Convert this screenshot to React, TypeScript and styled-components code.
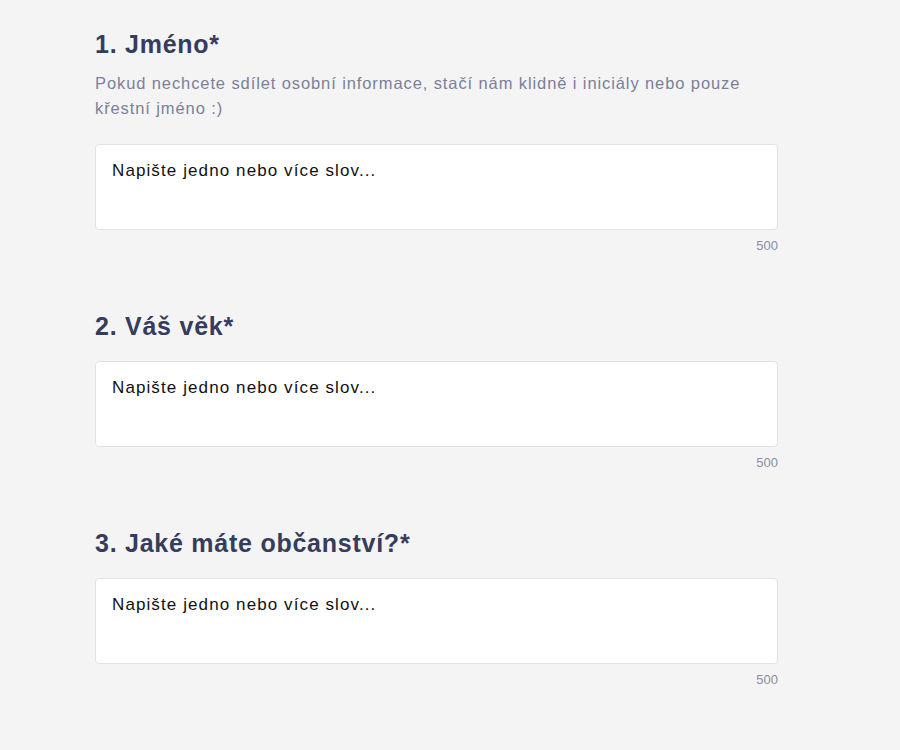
import React from "react";
import styled, { createGlobalStyle } from "styled-components";

const Global = createGlobalStyle`
  html, body { margin: 0; padding: 0; background: #f4f4f4; }
  body { font-family: "Liberation Sans", Arial, sans-serif; }
`;

const Page = styled.div`
  padding: 27px 0 40px 95px;
  width: 683px;
`;

const Section = styled.section`
  display: flex;
  flex-direction: column;
  & + & { margin-top: 56px; }
`;

const Heading = styled.h2`
  margin: 0;
  font-size: 25px;
  line-height: 34px;
  font-weight: 600;
  letter-spacing: 0.75px;
  color: #363c5e;
`;

const Helper = styled.p`
  margin: 10px 0 0;
  font-size: 16.5px;
  line-height: 25px;
  letter-spacing: 0.9px;
  color: #7b8099;
`;

const Box = styled.div<{ $withHelper?: boolean }>`
  margin-top: ${(p) => (p.$withHelper ? "23px" : "18px")};
  height: 86px;
  box-sizing: border-box;
  background: #ffffff;
  border: 1px solid #e2e2e4;
  border-radius: 4px;
  padding: 15px 16px;
  font-size: 17px;
  line-height: 22px;
  letter-spacing: 1.1px;
  color: #111111;
`;

const Counter = styled.div`
  align-self: flex-end;
  margin-top: 9px;
  font-size: 13px;
  line-height: 14px;
  color: #8a8ea3;
`;

const questions = [
  {
    title: "1. Jméno*",
    helper:
      "Pokud nechcete sdílet osobní informace, stačí nám klidně i iniciály nebo pouze křestní jméno :)",
  },
  { title: "2. Váš věk*" },
  { title: "3. Jaké máte občanství?*" },
];

export default function App() {
  return (
    <>
      <Global />
      <Page>
        {questions.map((q) => (
          <Section key={q.title}>
            <Heading>{q.title}</Heading>
            {q.helper && <Helper>{q.helper}</Helper>}
            <Box $withHelper={!!q.helper}>Napište jedno nebo více slov...</Box>
            <Counter>500</Counter>
          </Section>
        ))}
      </Page>
    </>
  );
}
